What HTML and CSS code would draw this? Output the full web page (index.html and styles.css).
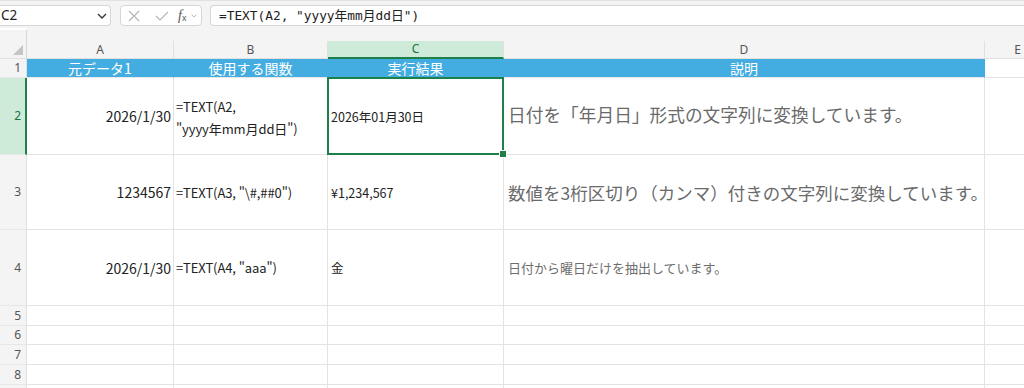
FILE: index.html
```html
<!DOCTYPE html>
<html lang="ja">
<head>
<meta charset="utf-8">
<title>TEXT関数</title>
<link rel="stylesheet" href="styles.css">
</head>
<body>
<div class="app">
  <div class="toolbar">
    <div class="namebox">
      <span class="ref">C2</span>
      <svg class="chev" width="10" height="6" viewBox="0 0 10 6"><path d="M1 1 L5 5 L9 1" fill="none" stroke="#333" stroke-width="1.3"/></svg>
    </div>
    <div class="fnbox">
      <svg class="ico-x" width="12" height="12" viewBox="0 0 12 12"><path d="M1 1 L11 11 M11 1 L1 11" stroke="#b4b4b4" stroke-width="1.1" fill="none"/></svg>
      <svg class="ico-ok" width="14" height="10" viewBox="0 0 14 10"><path d="M1 5 L5 9 L13 1" stroke="#b4b4b4" stroke-width="1.1" fill="none"/></svg>
      <span class="fx"><i>f</i><sub>x</sub></span>
      <svg class="chev-s" width="6" height="4" viewBox="0 0 6 4"><path d="M0.5 0.5 L3 3 L5.5 0.5" fill="none" stroke="#bbb" stroke-width="1"/></svg>
    </div>
    <div class="formula">=TEXT(A2, "yyyy年mm月dd日")</div>
  </div>

  <div class="sheet">
    <div class="corner"><span class="tri"></span></div>
    <div class="topgap"></div>

    <div class="ch">A</div>
    <div class="ch">B</div>
    <div class="ch ch-sel">C</div>
    <div class="ch">D</div>
    <div class="ch">E</div>
    <div class="ch ch-last"></div>

    <div class="rh">1</div>
    <div class="c hd">元データ1</div>
    <div class="c hd">使用する関数</div>
    <div class="c hd">実行結果</div>
    <div class="c hd">説明</div>
    <div class="c"></div>
    <div class="c"></div>

    <div class="rh rh-sel">2</div>
    <div class="c num">2026/1/30</div>
    <div class="c fn fn-wrap">=TEXT(A2, "yyyy年mm月dd日")</div>
    <div class="c res sel">2026年01月30日</div>
    <div class="c desc">日付を「年月日」形式の文字列に変換しています。</div>
    <div class="c"></div>
    <div class="c"></div>

    <div class="rh">3</div>
    <div class="c num">1234567</div>
    <div class="c fn">=TEXT(A3, "\#,##0")</div>
    <div class="c res">¥1,234,567</div>
    <div class="c desc desc-l">数値を3桁区切り（カンマ）付きの文字列に変換しています。</div>
    <div class="c"></div>
    <div class="c"></div>

    <div class="rh">4</div>
    <div class="c num">2026/1/30</div>
    <div class="c fn">=TEXT(A4, "aaa")</div>
    <div class="c res">金</div>
    <div class="c desc desc-s">日付から曜日だけを抽出しています。</div>
    <div class="c"></div>
    <div class="c"></div>

    <div class="rh">5</div>
    <div class="c"></div><div class="c"></div><div class="c"></div><div class="c"></div><div class="c"></div><div class="c"></div>
    <div class="rh">6</div>
    <div class="c"></div><div class="c"></div><div class="c"></div><div class="c"></div><div class="c"></div><div class="c"></div>
    <div class="rh">7</div>
    <div class="c"></div><div class="c"></div><div class="c"></div><div class="c"></div><div class="c"></div><div class="c"></div>
    <div class="rh">8</div>
    <div class="c"></div><div class="c"></div><div class="c"></div><div class="c"></div><div class="c"></div><div class="c"></div>
    <div class="rh"></div>
    <div class="c"></div><div class="c"></div><div class="c"></div><div class="c"></div><div class="c"></div><div class="c"></div>
  </div>
</div>
</body>
</html>
```

FILE: styles.css
```css
* { box-sizing: border-box; }

html, body {
  margin: 0;
  padding: 0;
  background: #ffffff;
  overflow: hidden;
}

body {
  width: 1024px;
  height: 388px;
  font-family: "Noto Sans CJK JP", "Noto Sans", sans-serif;
  color: #222;
}

.app {
  width: 1024px;
  height: 388px;
  overflow: hidden;
  background: #f4f4f4;
}

/* ---------- toolbar ---------- */
.toolbar {
  height: 28px;
  display: flex;
  align-items: flex-start;
  border-top: 1px solid #e2e2e2;
  padding-top: 4px;
}

.namebox {
  width: 111px;
  height: 21px;
  background: #fff;
  border: 1px solid #d6d6d6;
  border-left: none;
  border-radius: 0 4px 4px 0;
  display: flex;
  align-items: center;
  justify-content: space-between;
  padding: 0 3px 0 1px;
}

.ref {
  font-family: "Noto Sans", sans-serif;
  font-size: 13.5px;
  color: #222;
  line-height: 1;
}

.fnbox {
  margin-left: 9px;
  width: 82px;
  height: 21px;
  background: #fff;
  border: 1px solid #d6d6d6;
  border-radius: 4px;
  display: flex;
  align-items: center;
  padding-left: 7px;
}

.ico-x { margin-right: 15px; }
.ico-ok { margin-right: 9px; }

.fx {
  font-family: "Liberation Serif", serif;
  font-size: 14px;
  color: #555;
  line-height: 1;
  margin-right: 5px;
}
.fx i { font-style: italic; }
.fx sub {
  font-family: "Liberation Sans", sans-serif;
  font-size: 9px;
  vertical-align: -1px;
}

.formula {
  margin-left: 8px;
  flex: 1;
  height: 21px;
  background: #fff;
  border: 1px solid #d6d6d6;
  border-right: none;
  border-radius: 4px 0 0 4px;
  font-family: "DejaVu Sans Mono", "Noto Sans CJK JP", monospace;
  font-size: 12.8px;
  line-height: 19px;
  padding-left: 8px;
  color: #222;
  white-space: nowrap;
}

/* ---------- sheet ---------- */
.sheet {
  display: grid;
  grid-template-columns: 27px 147px 154px 176px 481px 66px 1fr;
  grid-template-rows: 13px 18px 19px 77px 75px 76px 20px 19px 20px 20px 20px;
  background: #fff;
}

.corner {
  grid-row: 1 / span 2;
  grid-column: 1;
  background: #f4f4f4;
  border-right: 1px solid #d4d4d4;
  border-bottom: 1px solid #e0e0e0;
  position: relative;
  margin-top: 2px;
}

.tri {
  position: absolute;
  right: 3px;
  bottom: 3px;
  width: 0;
  height: 0;
  border-left: 10px solid transparent;
  border-bottom: 10px solid #c4c4c4;
}

.topgap {
  grid-row: 1;
  grid-column: 2 / -1;
  background: #f4f4f4;
}

.ch {
  background: #f4f4f4;
  border-right: 1px solid #e0e0e0;
  border-bottom: 1px solid #e0e0e0;
  font-family: "Noto Sans", sans-serif;
  font-size: 12px;
  color: #555;
  display: flex;
  align-items: center;
  justify-content: center;
  line-height: 1;
}
.ch-last { border-right: none; }

.ch-sel {
  background: #cdebd8;
  color: #1f6f42;
  border-bottom: 2px solid #1e8049;
}

.rh {
  background: #f4f4f4;
  border-right: 1px solid #e0e0e0;
  border-bottom: 1px solid #e6e6e6;
  font-family: "Noto Sans", sans-serif;
  font-size: 12px;
  color: #555;
  display: flex;
  align-items: center;
  justify-content: flex-end;
  padding-right: 5px;
  line-height: 1;
}

.rh-sel {
  background: #cdebd8;
  color: #1f6f42;
  border-right: 2px solid #1e8049;
  padding-right: 4px;
}

.c {
  border-right: 1px solid #e3e3e3;
  border-bottom: 1px solid #e3e3e3;
  display: flex;
  align-items: center;
  min-width: 0;
  overflow: visible;
  white-space: nowrap;
}

.hd {
  background: #43ade1;
  border-right-color: #43ade1;
  border-bottom-color: #e8e8e8;
  color: #fff;
  font-size: 14px;
  justify-content: center;
  line-height: 1;
}

.num {
  justify-content: flex-end;
  padding-right: 2px;
  font-size: 14px;
  color: #222;
}

.fn {
  padding-left: 2px;
  font-size: 13px;
  color: #222;
  letter-spacing: -0.1px;
}

.fn-wrap {
  white-space: normal;
  word-break: keep-all;
  line-height: 22px;
  padding-top: 3px;
}

.res {
  padding-left: 3px;
  font-size: 12.5px;
  color: #222;
}

.sel { position: relative; }
.sel::after {
  content: "";
  position: absolute;
  left: -1px;
  top: -1px;
  right: -1px;
  bottom: -1px;
  border: 2px solid #1e8049;
}
.sel::before {
  content: "";
  position: absolute;
  right: -4px;
  bottom: -4px;
  width: 6px;
  height: 6px;
  background: #1e8049;
  border: 1px solid #fff;
  z-index: 2;
}

.desc {
  padding-left: 4px;
  font-size: 17.7px;
  color: #6a6a6a;
  padding-bottom: 4px;
}
.desc-l { font-size: 17.5px; padding-bottom: 0; }
.desc-s { font-size: 13px; color: #6e6e6e; padding-bottom: 0; }
```
